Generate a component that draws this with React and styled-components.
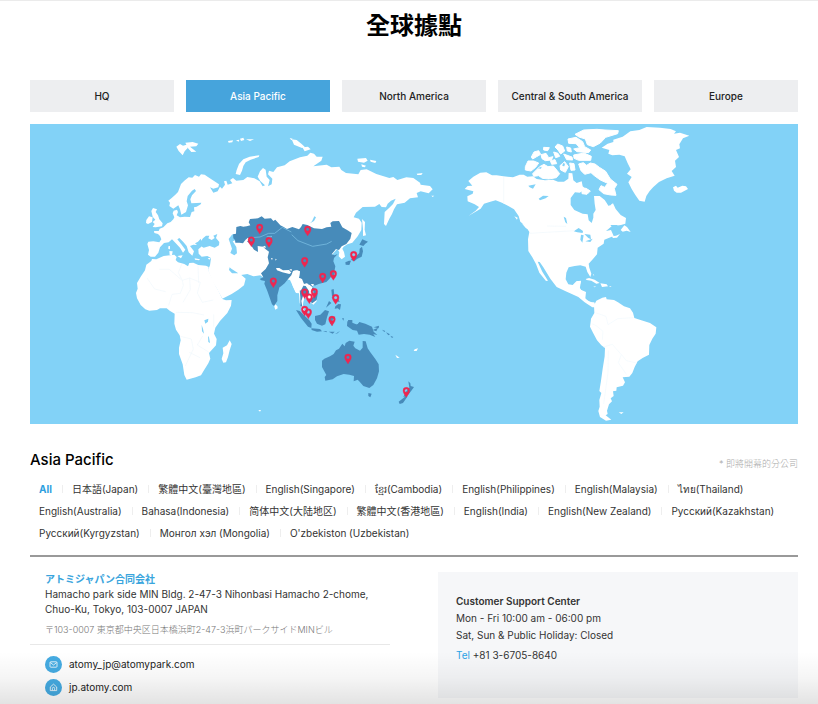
import React from 'react'
import styled, { createGlobalStyle } from 'styled-components'

const GlobalStyle = createGlobalStyle`
  * {
    box-sizing: border-box;
  }
  body {
    margin: 0;
    background: #fff;
    color: #333;
    font-family: Inter, 'Noto Sans CJK TC', 'Noto Sans', sans-serif;
    font-size: 10px;
  }
  h1, h2, h3, p, ul {
    margin: 0;
    padding: 0;
  }
`

// #region Styled Components
const Page = styled.main`
  position: relative;
  border-top: 1px solid #ebebeb;
  padding: 7px 20px 6px 30px;
`

const Title = styled.h1`
  color: #000;
  font-size: 24px;
  line-height: 36px;
  font-weight: 700;
  text-align: center;
`

const Tabs = styled.nav`
  display: grid;
  grid-template-columns: repeat(5, 1fr);
  gap: 12px;
  margin: 36px 0 12px;
`

const Tab = styled.button`
  height: 32px;
  border: none;
  padding: 0;
  font: inherit;
  font-weight: 500;
  color: ${(props) => (props.$active ? '#fff' : '#222')};
  background: ${(props) => (props.$active ? '#46a4dc' : '#edeef0')};
`

const Map = styled.svg`
  display: block;
  width: 100%;
  background: #82d2f7;
`

const RegionHeader = styled.header`
  display: flex;
  justify-content: space-between;
  align-items: flex-end;
  margin-top: 24px;
`

const RegionName = styled.h2`
  color: #000;
  font-size: 15px;
  line-height: 24px;
  font-weight: 500;
`

const Note = styled.p`
  color: #aaa;
  font-size: 9px;
  font-weight: 300;
  line-height: 16px;
`

const Countries = styled.ul`
  display: flex;
  flex-wrap: wrap;
  column-gap: 20px;
  margin-top: 6px;
  padding: 0 9px 11px;
  border-bottom: 2px solid #999;
  overflow: hidden;
  list-style: none;
`

const Country = styled.li`
  display: flex;
  align-items: center;
  height: 22px;

  & + &::before {
    content: '';
    width: 1px;
    height: 8px;
    margin: 0 9px 0 -10px;
    background: #eee;
  }
`

const CountryLink = styled.a`
  color: ${(props) => (props.$active ? '#2e9fe0' : '#333')};
  font-weight: ${(props) => (props.$active ? 700 : 400)};
  line-height: 22px;
  white-space: nowrap;
  text-decoration: none;
`

const Details = styled.section`
  display: grid;
  grid-template-columns: 1fr 1fr;
  gap: 48px;
  margin-top: 15px;
`

const Address = styled.div`
  padding: 0 15px 7px;
  border-bottom: 1px solid #e8e8e8;
`

const Company = styled.h3`
  color: #3aa5dd;
  font-size: 10px;
  line-height: 15px;
  font-weight: 700;
`

const Street = styled.p`
  line-height: 15px;
`

const LocalStreet = styled.p`
  margin-top: 5px;
  color: #777;
  font-size: 9px;
  font-weight: 300;
  line-height: 15px;
`

const Contacts = styled.div`
  display: grid;
  gap: 6px;
  padding: 11px 15px 0;
`

const Contact = styled.a`
  display: flex;
  align-items: center;
  gap: 7px;
  color: #222;
  line-height: 17px;
  text-decoration: none;
`

const Round = styled.svg`
  width: 17px;
  height: 17px;
  fill: none;
  stroke: #fff;
`

const Support = styled.div`
  min-height: 126px;
  padding: 21px 18px;
  background: #f6f7f9;
  line-height: 17px;
`

const SupportTitle = styled.h3`
  color: #333;
  font-size: 10px;
  font-weight: 600;
`

const Tel = styled.p`
  margin-top: 3px;

  span {
    color: #2ba3e6;
  }
`

const Fade = styled.div`
  position: absolute;
  right: 0;
  bottom: 0;
  left: 0;
  height: 52px;
  background: linear-gradient(rgba(0, 0, 0, 0), rgba(0, 0, 0, 0.04) 50%, rgba(0, 0, 0, 0.11));
  pointer-events: none;
`
// #endregion

const regions = ['HQ', 'Asia Pacific', 'North America', 'Central & South America', 'Europe']

const countries = [
  'All',
  '日本語(Japan)',
  '繁體中文(臺灣地區)',
  'English(Singapore)',
  'ខ្មែរ(Cambodia)',
  'English(Philippines)',
  'English(Malaysia)',
  'ไทย(Thailand)',
  'English(Australia)',
  'Bahasa(Indonesia)',
  '简体中文(大陆地区)',
  '繁體中文(香港地區)',
  'English(India)',
  'English(New Zealand)',
  'Русский(Kazakhstan)',
  'Русский(Kyrgyzstan)',
  'Монгол хэл (Mongolia)',
  "O'zbekiston (Uzbekistan)",
]

const pins = [
  [689, 314], [664, 352], [717, 354], [833, 320], [824, 414], [971, 396],
  [878, 461], [910, 453], [730, 475], [824, 508], [853, 507], [838, 523],
  [917, 525], [824, 560], [835, 568], [906, 590], [954, 704], [1129, 804],
]

const WorldMap = () => (
  <Map viewBox="0 0 2304 900" role="img" aria-label="World map">
    {/* Europe, Russia, the Middle East */}
    <g transform="translate(300 0)" fill="#fff">
      <path d="M54 392L57 378 52 360 55 353 70 352 88 355 94 346 90 336 84 330 73 327 72 321 86 321 89 314 100 310 112 298 122 294 130 286 133 280 128 268 131 260 141 257 144 264 140 274 150 280 164 278 180 279 185 264 193 262 192 250 200 248 212 241 214 236 184 238 181 226 186 214 198 201 194 195 186 200 173 216 170 232 174 244 168 264 154 272 150 256 145 244 130 254 118 246 120 236 115 230 125 222 136 212 144 204 150 188 153 180 163 170 176 160 187 161 195 153 207 158 213 151 224 152 235 160 251 170 267 181 265 190 250 194 240 190 250 206 263 202 270 188 276 194 285 182 282 172 289 170 293 182 307 178 300 168 309 162 319 170 340 168 352 159 373 163 389 172 398 187 405 184 391 171 383 158 390 142 399 132 407 137 410 158 419 168 414 187 425 181 427 164 414 151 417 140 430 144 441 130 464 124 479 112 510 100 532 95 541 86 552 89 560 98 578 98 574 110 550 127 590 122 604 130 628 128 634 138 648 147 685 151 692 138 710 136 739 150 778 162 790 159 802 168 829 160 850 162 870 176 872 182 900 186 908 196 896 208 872 202 860 207 864 220 840 223 824 236 801 241 792 256 786 270 778 284 768 306 762 300 764 264 778 251 789 240 797 224 783 230 773 239 768 250 755 249 748 240 735 248 698 249 678 266 671 280 687 284 695 296 694 318 683 337 667 356 652 361 641 368 637 374 642 384 645 398 635 406 626 397 628 385 622 374 600 400 580 452 546 488 548 506 559 520 560 532 550 542 541 535 529 522 524 520 520 534 518 548 524 560 519 562 509 537 507 508 498 507 488 485 480 468 470 466 440 500 403 463 391 454 370 457 352 450 333 453 318 443 304 434 299 430 297 438 306 448 326 448 335 454 347 464 342 484 325 497 305 510 277 524 264 500 250 476 234 438 240 424 243 402 232 396 215 398 206 389 205 376 214 368 216 356 212 344 204 353 195 358 201 363 190 362 180 366 192 382 187 395 176 385 170 366 160 354 148 342 142 346 155 362 166 377 159 386 150 371 136 356 126 346 116 355 102 357 90 370 85 386 75 398 62 398Z" />
      {/* British Isles and northern islands */}
      <path d="M64 261L69 252 81 256 77 264 84 274 88 286 98 298 96 307 77 310 68 309 74 300 68 294 76 287 68 278ZM49 288L57 277 68 280 66 294 54 300 48 297Z" />
      <path d="M139 68L150 60 159 65 170 62 173 72 164 82 158 94 146 81ZM166 56L188 54 205 59 199 67 180 68 199 83 184 84 174 73Z" />
      <path d="M294 51L309 49 307 55 296 56ZM318 49L328 47 326 53ZM330 44L340 41 343 48 333 51ZM348 46L372 46 360 51ZM388 94L386 99 362 107 347 115 340 126 336 140 330 153 317 150 320 138 327 120 340 106 359 98ZM485 46L500 48 514 59 524 68 516 72 492 62ZM517 70L534 68 542 76 524 82ZM479 42L488 44 484 49Z" />
      <path d="M682 104L708 102 713 110 702 116 684 113ZM720 107L739 111 736 117 722 113ZM694 121L708 125 704 130 696 128ZM860 149L878 147 874 153 862 153ZM904 215L913 215 908 219Z" />
      <path d="M696 285L705 294 704 317 708 334 699 336 699 315ZM115 367L120 366 120 376 115 375ZM118 381L128 382 126 394 119 393ZM142 396L158 394 153 403ZM194 403L210 406 207 409 195 407ZM233 403L243 401 238 407Z" />
      <path d="M434 540L442 546 443 553 436 557 433 548Z" />
    </g>

    {/* Africa */}
    <g transform="translate(300 345)" fill="#fff">
      <path d="M66 60L79 61 101 51 133 47 140 54 137 63 144 70 163 75 174 82 178 72 190 71 205 78 228 80 236 84 235 94 245 114 258 143 266 157 277 180 288 184 305 183 303 200 292 222 270 246 256 266 252 284 260 300 258 319 237 342 241 359 235 373 222 394 213 409 197 415 170 422 163 408 158 376 147 345 147 326 152 304 149 289 138 272 133 254 134 224 119 215 110 208 90 208 81 213 58 215 46 211 32 198 21 178 18 162 23 149 21 132 33 112 45 94 49 77 64 66Z" />
      <path d="M299 304L305 315 299 334 294 354 288 370 280 371 275 360 280 343 278 326 291 319Z" />
      <g fill="#82d2f7">
        <path d="M223 244L235 239 234 248 226 254ZM215 258L219 269 222 284 216 277ZM234 291L237 295 240 312 235 309Z" />
      </g>
      <path d="M88 91L118 91 155 123M155 76L145 101 157 124 179 117 211 130M204 80L206 132M157 124L160 140 151 163 126 166 116 199M211 130L202 162 217 190 250 183M51 117L74 150 107 158M179 117L181 152 159 190M138 220L188 221 222 228M151 292L184 300 190 330 166 381M218 291L202 318 236 339M251 226L251 263M178 340L210 356" fill="none" stroke="#f0f8fc" strokeWidth="2" />
    </g>

    {/* inland seas */}
    <g transform="translate(300 0)" fill="#82d2f7">
      <path d="M212 366L211 354 219 343 228 335 238 335 235 343 245 348 254 342 250 335 262 330 258 342 268 354 267 364 254 371 239 366 221 371Z" />
      <path d="M296 345L307 331 318 336 319 348 308 352 319 369 321 388 313 394 301 387 306 374Z" />
    </g>

    {/* Asia Pacific */}
    <g transform="translate(585 255)" fill="#478bba">
      <path d="M33 74L34 54 46 51 55 53 65 52 76 49 71 40 75 30 99 28 110 22 119 29 138 28 145 36 151 32 166 49 176 54 186 60 202 54 222 61 228 54 233 45 247 48 267 58 291 60 305 55 319 53 316 42 323 37 342 36 352 55 370 65 380 72 376 89 364 105 350 112 342 123 333 120 320 136 329 139 338 135 327 147 325 157 331 172 328 188 315 208 304 219 281 225 269 230 265 225 254 225 245 223 237 225 231 210 222 207 225 187 211 184 204 186 199 199 190 209 179 223 163 236 157 259 157 276 147 291 141 286 127 246 118 224 120 216 109 214 104 210 115 205 108 193 122 180 132 163 128 145 132 128 122 121 114 113 98 111 99 129 87 122 75 104 61 93 54 103 43 101 31 101 30 93 25 88 24 76Z" />
      <path d="M412 91L429 98 421 104 415 111 403 107ZM411 113L414 127 410 143 397 149 388 157 377 152 392 143 403 132 404 119ZM372 155L378 155 373 168 362 167 361 160ZM320 193L330 188 325 208Z" />
      <path d="M319 242L326 240 328 258 320 266 329 274 340 271 344 279 329 275 321 261ZM331 292L340 285 348 286 345 303 338 298 329 299ZM312 276L319 282 303 296Z" />
      <path d="M213 303L224 306 237 319 253 334 260 344 259 357 249 353 228 327ZM270 321L286 317 300 303 312 307 306 325 301 346 291 350 276 344 270 333ZM259 358L285 360 291 367 276 368 260 363ZM294 366L306 367 304 370ZM311 368L329 368 323 374ZM330 375L345 366 338 373ZM315 324L331 323 323 332 323 350 315 343Z" />
      <path d="M247 223L255 222 264 234 278 254 275 273 262 283 252 275 268 260 265 246ZM229 228L242 231 252 246 253 256 241 263 235 258 229 276 232 294 226 291 226 264 224 242Z" />
      <path d="M369 333L382 333 382 341 397 347 403 339 421 344 441 353 446 368 457 378 440 374 421 369 401 372 398 359 382 352 370 349ZM446 355L462 350 461 358Z" />
    </g>
    <g transform="translate(585 255)" fill="#fff">
      <path d="M153 177L163 177 174 184 192 183 199 191 193 195 172 190 156 184ZM193 181L201 181 199 187ZM151 149L155 151 152 155ZM138 147L143 148 141 154Z" />
      <path d="M215 183L224 187 222 207 231 211 230 224 240 225 253 227 263 235 259 242 247 232 236 229 228 244 222 245 212 250 203 231 199 203 207 196Z" />
    </g>
    <path d="M662 341L690 339 716 328 734 328 757 310 784 324M710 338L726 337 714 344M785 332L804 350 848 367 890 360 905 352" fill="none" stroke="#82c6e8" strokeWidth="2" />
    <path d="M840 298L846 292 853 277 858 280 852 291Z" fill="#82d2f7" />
    <path d="M646 348L654 341 660 346 649 354ZM695 370L705 365 708 371Z" fill="#fff" />

    {/* Oceania */}
    <g transform="translate(780 465)" fill="#478bba">
      <path d="M96 245L103 239 120 232 131 225 138 214 147 209 157 194 164 202 167 192 178 185 194 188 190 200 196 208 210 215 218 206 218 186 227 187 233 208 241 220 256 240 266 256 267 277 261 298 250 318 238 327 220 321 209 308 203 302 191 307 192 291 178 287 161 285 141 292 128 301 106 305 104 294 109 288 96 264ZM235 342L245 344 241 355 235 351Z" />
      <path d="M355 307L361 313 362 321 372 324 364 335 352 350 340 354 348 338 358 326ZM348 351L353 352 339 372 329 375 326 368Z" />
      <path d="M172 127L182 127 180 135 193 141 207 133 229 138 243 155 256 174 239 167 222 165 206 167 201 155 188 153 171 141ZM248 153L264 146 259 157ZM276 152L286 156 283 159ZM288 160L300 166 295 169ZM301 170L310 174 306 177ZM156 118L162 118 160 125Z" />
      <g fill="#fff">
        <path d="M316 227L329 236 321 237ZM374 211L384 208 380 216 371 216Z" />
      </g>
    </g>

    {/* North America and Greenland */}
    <g transform="translate(1290 0)" fill="#fff">
      <path d="M25 171L40 158 61 146 79 145 96 154 110 154 130 157 159 160 179 152 191 152 202 158 219 157 230 165 255 169 279 167 294 173 312 173 325 164 326 147 337 148 340 169 350 177 365 172 368 187 377 195 359 206 345 205 332 222 332 243 343 258 368 269 383 271 386 289 395 297 400 281 400 269 407 258 404 239 402 216 419 216 434 228 446 246 459 238 467 255 482 273 498 282 496 299 483 303 455 307 438 321 453 318 461 336 433 347 431 359 413 371 411 391 397 407 386 419 388 431 394 449 391 459 382 444 377 428 361 424 344 426 326 430 319 446 317 466 325 481 338 483 349 472 363 470 358 489 365 500 374 508 375 526 388 532 404 539 407 550 397 550 374 535 355 519 337 511 317 502 290 489 271 464 250 430 239 414 233 413 247 443 264 470 258 471 238 446 228 420 217 400 205 381 204 346 208 324 196 305 181 293 176 276 162 256 145 246 126 236 107 229 91 233 72 239 62 254 25 276 47 260 57 249 44 241 23 232 22 217 38 209 40 202 14 195 23 186 37 185Z" />
      {/* Arctic archipelago */}
      <g stroke="#fff" strokeWidth="3" strokeLinejoin="round">
        <path d="M196 128L204 111 221 111 236 117 227 130 213 141 196 138ZM218 149L239 128 252 121 264 128 280 126 291 139 299 149 289 161 266 165 247 163 236 155 221 157ZM271 110L285 107 290 119 275 121ZM300 125L314 113 325 128 316 145 302 138ZM329 117L342 119 345 138 333 139ZM356 120L370 116 380 124 391 117 405 120 418 130 437 142 451 165 471 181 463 194 468 214 452 213 431 209 417 197 423 185 434 190 443 178 421 168 403 155 393 146 374 151 363 140Z" />
        <path d="M214 99L222 84 236 80 242 91 230 98 218 105ZM251 70L268 71 263 80 251 78ZM243 92L258 88 266 101 279 98 274 108 256 110 246 104ZM285 69L293 60 308 66 314 81 302 90 294 78ZM281 84L294 88 299 97 287 101ZM311 90L336 99 338 108 320 107ZM341 93L372 87 394 97 392 109 356 109 342 103ZM320 69L332 72 334 84 322 81ZM324 45L348 40 368 53 374 68 392 78 386 86 351 83 341 75 359 71 348 59 326 58ZM345 31L371 18 411 16 435 18 475 20 473 29 437 40 421 57 400 68 382 62 376 45 357 39ZM366 192L378 193 391 201 381 211 366 209Z" />
      </g>
      <path d="M425 71L443 59 460 54 460 47 488 38 511 22 538 18 560 9 600 11 632 15 648 22 642 29 660 26 688 35 669 43 658 61 660 73 648 78 657 99 645 110 648 129 635 141 644 155 620 163 597 174 580 189 569 201 559 216 554 233 538 230 526 213 515 195 505 175 515 159 501 149 512 136 503 118 494 97 478 92 457 94 445 89 448 78ZM639 190L648 185 653 191 667 185 678 187 684 195 663 206 650 206 642 200Z" />
      <path d="M482 318L493 304 501 309 512 324 500 320 488 323ZM455 337L468 335 480 330 471 341 459 342ZM163 277L173 281 171 287ZM185 298L202 306 211 319 198 313Z" />
      <g fill="#82d2f7">
        <path d="M205 185L227 181 219 194 209 190ZM236 224L249 215 266 216 257 223 240 229ZM311 278L318 282 322 300 316 295ZM341 322L356 312 369 321 368 327 352 325ZM363 332L371 334 367 356 361 347ZM373 330L391 332 393 346 385 342ZM376 352L398 344 391 354ZM440 232L451 228 453 244 444 242ZM377 166L387 165 389 180 378 176ZM309 117L315 119 313 127 307 126ZM233 133L245 128 243 134ZM451 303L474 303 461 314Z" />
      </g>
      <path d="M131 159L131 239M261 306L318 307M208 328L345 320" fill="none" stroke="#f0f8fc" strokeWidth="2" />
    </g>

    {/* Central and South America */}
    <g transform="translate(1470 345)" fill="#fff">
      <path d="M129 148L151 158 173 164 190 184 207 195 225 197 223 190 208 190 196 178 198 159 179 151 183 126 171 126 165 138 145 139 128 129 112 143Z" />
      <path d="M222 199L229 185 247 176 258 174 260 181 282 183 294 190 312 202 330 208 339 221 343 237 364 244 390 252 409 265 407 284 397 299 388 318 387 347 369 356 353 367 344 384 337 402 328 413 308 415 315 430 309 440 290 445 289 455 279 457 281 471 272 478 276 487 267 496 261 515 263 525 257 529 274 542 258 545 240 534 235 516 239 503 238 483 244 462 238 456 243 425 248 389 254 352 255 327 244 319 231 304 219 281 210 263 213 239 223 222Z" />
      <path d="M197 120L207 117 224 122 239 132 229 134 214 125 200 123ZM241 133L260 136 264 142 246 144ZM220 142L229 143 224 145ZM268 141L275 142 270 144ZM296 520L311 520 304 525ZM220 105L223 110 219 108Z" />
      <path d="M229 222L258 232 264 257 293 239 340 236M216 254L230 261 249 277 247 302M251 324L277 316 304 347 295 371 319 406M265 335L264 400 251 495M305 347L319 365 350 372" fill="none" stroke="#f2f9fd" strokeWidth="2" />
    </g>
    <path d="M685 858L693 858 690 863Z" fill="#fff" />

    {pins.map(([x, y]) => (
      <path
        key={`${x}-${y}`}
        transform={`translate(${x} ${y})`}
        d="M0 16C-2 11-10 4-10-4A10 10 0 0 1 10-4C10 4 2 11 0 16ZM0-9A5 5 0 1 0 0 1A5 5 0 1 0 0-9Z"
        fill="#f0254f"
        stroke="#f0254f"
        fillRule="evenodd"
      />
    ))}
  </Map>
)

const App = () => {
  return (
    <>
      <GlobalStyle />
      <Page>
        <Title>全球據點</Title>

        <Tabs>
          {regions.map((region) => (
            <Tab key={region} type="button" $active={region === 'Asia Pacific'}>
              {region}
            </Tab>
          ))}
        </Tabs>

        <WorldMap />

        <RegionHeader>
          <RegionName>Asia Pacific</RegionName>
          <Note>* 即將開幕的分公司</Note>
        </RegionHeader>

        <Countries>
          {countries.map((country) => (
            <Country key={country}>
              <CountryLink href="##" $active={country === 'All'}>
                {country}
              </CountryLink>
            </Country>
          ))}
        </Countries>

        <Details>
          <div>
            <Address>
              <Company lang="ja">アトミジャパン合同会社</Company>
              <Street>
                Hamacho park side MIN Bldg. 2-47-3 Nihonbasi Hamacho 2-chome,
                <br />
                Chuo-Ku, Tokyo, 103-0007 JAPAN
              </Street>
              <LocalStreet lang="ja">
                〒103-0007 東京都中央区日本橋浜町2-47-3浜町パークサイドMINビル
              </LocalStreet>
            </Address>
            <Contacts>
              <Contact href="mailto:atomy_jp@atomypark.com">
                <Round viewBox="0 0 17 17" aria-hidden="true">
                  <circle cx="8.5" cy="8.5" r="8.5" fill="#45abe2" stroke="none" />
                  <rect x="5" y="5.8" width="7" height="5.4" rx="0.8" strokeWidth="0.8" />
                  <path d="M5.4 6.6L8.5 9 11.6 6.6" strokeWidth="0.8" />
                </Round>
                atomy_jp@atomypark.com
              </Contact>
              <Contact href="##">
                <Round viewBox="0 0 17 17" aria-hidden="true">
                  <circle cx="8.5" cy="8.5" r="8.5" fill="#45abe2" stroke="none" />
                  <path d="M5.3 8L8.5 5.2 11.7 8V11.6H5.3ZM7.4 11.4V9.4A1.1 1.1 0 0 1 9.6 9.4V11.4" strokeWidth="0.8" />
                </Round>
                jp.atomy.com
              </Contact>
            </Contacts>
          </div>

          <Support>
            <SupportTitle>Customer Support Center</SupportTitle>
            <p>Mon - Fri 10:00 am - 06:00 pm</p>
            <p>Sat, Sun &amp; Public Holiday: Closed</p>
            <Tel>
              <span>Tel</span> +81 3-6705-8640
            </Tel>
          </Support>
        </Details>
        <Fade />
      </Page>
    </>
  )
}

export default App
